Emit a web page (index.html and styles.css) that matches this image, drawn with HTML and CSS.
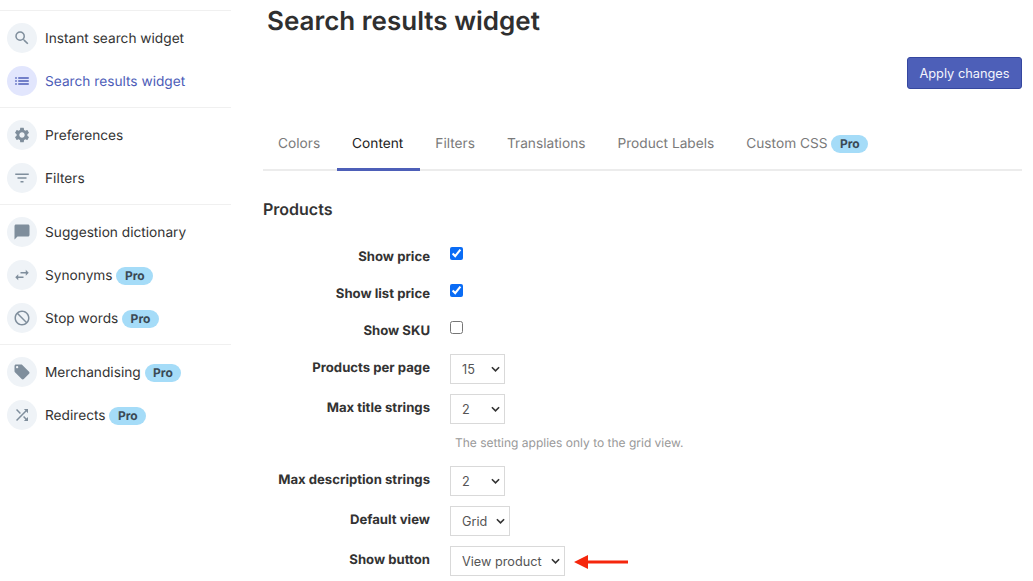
FILE: index.html
```html
<!DOCTYPE html>
<html lang="en">
<head>
  <meta charset="UTF-8">
  <meta name="viewport" content="width=device-width, initial-scale=1.0">
  <title>Search results widget</title>
  <link rel="stylesheet" href="styles.css">
</head>
<body>
  <aside class="sidebar">
    <ul class="nav-group">
      <li class="nav-item">
        <span class="nav-icon"><svg viewBox="0 0 24 24"><path d="M15.5 14h-.79l-.28-.27A6.471 6.471 0 0 0 16 9.5 6.5 6.5 0 1 0 9.5 16c1.61 0 3.09-.59 4.23-1.57l.27.28v.79l5 4.99L20.49 19l-4.99-5zm-6 0C7.01 14 5 11.99 5 9.5S7.01 5 9.5 5 14 7.01 14 9.5 11.99 14 9.5 14z"/></svg></span>
        <span class="nav-text">Instant search widget</span>
      </li>
      <li class="nav-item active">
        <span class="nav-icon"><svg viewBox="0 0 24 24"><path d="M3 13h2v-2H3v2zm0 4h2v-2H3v2zm0-8h2V7H3v2zm4 4h14v-2H7v2zm0 4h14v-2H7v2zM7 7v2h14V7H7z"/></svg></span>
        <span class="nav-text">Search results widget</span>
      </li>
    </ul>
    <ul class="nav-group">
      <li class="nav-item">
        <span class="nav-icon"><svg viewBox="0 0 24 24"><path d="M19.14 12.94c.04-.3.06-.61.06-.94 0-.32-.02-.64-.07-.94l2.03-1.58a.49.49 0 0 0 .12-.61l-1.92-3.32a.488.488 0 0 0-.59-.22l-2.39.96c-.5-.38-1.03-.7-1.62-.94l-.36-2.54a.484.484 0 0 0-.48-.41h-3.84c-.24 0-.43.17-.47.41l-.36 2.54c-.59.24-1.13.57-1.62.94l-2.39-.96c-.22-.08-.47 0-.59.22L2.74 8.87c-.12.21-.08.47.12.61l2.03 1.58c-.05.3-.09.63-.09.94s.02.64.07.94l-2.03 1.58a.49.49 0 0 0-.12.61l1.92 3.32c.12.22.37.29.59.22l2.39-.96c.5.38 1.03.7 1.62.94l.36 2.54c.05.24.24.41.48.41h3.84c.24 0 .44-.17.47-.41l.36-2.54c.59-.24 1.13-.56 1.62-.94l2.39.96c.22.08.47 0 .59-.22l1.92-3.32c.12-.22.07-.47-.12-.61l-2.01-1.58zM12 15.6c-1.98 0-3.6-1.62-3.6-3.6s1.62-3.6 3.6-3.6 3.6 1.62 3.6 3.6-1.62 3.6-3.6 3.6z"/></svg></span>
        <span class="nav-text">Preferences</span>
      </li>
      <li class="nav-item">
        <span class="nav-icon"><svg viewBox="0 0 24 24"><path d="M10 18h4v-2h-4v2zM3 6v2h18V6H3zm3 7h12v-2H6v2z"/></svg></span>
        <span class="nav-text">Filters</span>
      </li>
    </ul>
    <ul class="nav-group">
      <li class="nav-item">
        <span class="nav-icon"><svg viewBox="0 0 24 24"><path d="M20 2H4c-1.1 0-1.99.9-1.99 2L2 22l4-4h14c1.1 0 2-.9 2-2V4c0-1.1-.9-2-2-2z"/></svg></span>
        <span class="nav-text">Suggestion dictionary</span>
      </li>
      <li class="nav-item">
        <span class="nav-icon"><svg viewBox="0 0 24 24"><path d="M6.99 11L3 15l3.99 4v-3H14v-2H6.99v-3zM21 9l-3.99-4v3H10v2h7.01v3L21 9z"/></svg></span>
        <span class="nav-text">Synonyms <span class="pro">Pro</span></span>
      </li>
      <li class="nav-item">
        <span class="nav-icon"><svg viewBox="0 0 24 24"><path d="M12 2C6.48 2 2 6.48 2 12s4.48 10 10 10 10-4.48 10-10S17.52 2 12 2zm0 18c-4.42 0-8-3.58-8-8 0-1.85.63-3.55 1.69-4.9L16.9 18.31A7.902 7.902 0 0 1 12 20zm6.31-3.1L7.1 5.69A7.902 7.902 0 0 1 12 4c4.42 0 8 3.58 8 8 0 1.85-.63 3.55-1.69 4.9z"/></svg></span>
        <span class="nav-text">Stop words <span class="pro">Pro</span></span>
      </li>
    </ul>
    <ul class="nav-group">
      <li class="nav-item">
        <span class="nav-icon"><svg viewBox="0 0 24 24"><path d="M21.41 11.58l-9-9C12.05 2.22 11.55 2 11 2H4c-1.1 0-2 .9-2 2v7c0 .55.22 1.05.59 1.42l9 9c.36.36.86.58 1.41.58.55 0 1.05-.22 1.41-.59l7-7c.37-.36.59-.86.59-1.41 0-.55-.23-1.06-.59-1.42zM5.5 7C4.67 7 4 6.33 4 5.5S4.67 4 5.5 4 7 4.67 7 5.5 6.33 7 5.5 7z"/></svg></span>
        <span class="nav-text">Merchandising <span class="pro">Pro</span></span>
      </li>
      <li class="nav-item">
        <span class="nav-icon"><svg viewBox="0 0 24 24"><path d="M10.59 9.17L5.41 4 4 5.41l5.17 5.17 1.42-1.41zM14.5 4l2.04 2.04L4 18.59 5.41 20 17.96 7.46 20 9.5V4h-5.5zm.33 9.41l-1.41 1.41 3.13 3.13L14.5 20H20v-5.5l-2.04 2.04-3.13-3.13z"/></svg></span>
        <span class="nav-text">Redirects <span class="pro">Pro</span></span>
      </li>
    </ul>
  </aside>

  <main class="content">
    <h1>Search results widget</h1>

    <div class="actions">
      <button class="apply-btn" type="button">Apply changes</button>
    </div>

    <nav class="tabs">
      <a class="tab">Colors</a>
      <a class="tab current">Content</a>
      <a class="tab">Filters</a>
      <a class="tab">Translations</a>
      <a class="tab">Product Labels</a>
      <a class="tab">Custom CSS <span class="pro">Pro</span></a>
    </nav>

    <h2>Products</h2>

    <form class="settings">
      <div class="field check-field">
        <label>Show price</label>
        <input type="checkbox" checked>
      </div>
      <div class="field check-field">
        <label>Show list price</label>
        <input type="checkbox" checked>
      </div>
      <div class="field check-field">
        <label>Show SKU</label>
        <input type="checkbox">
      </div>
      <div class="field">
        <label>Products per page</label>
        <select class="select-num"><option>15</option></select>
      </div>
      <div class="field">
        <label>Max title strings</label>
        <select class="select-num"><option>2</option></select>
      </div>
      <p class="help">The setting applies only to the grid view.</p>
      <div class="field">
        <label>Max description strings</label>
        <select class="select-num"><option>2</option></select>
      </div>
      <div class="field">
        <label>Default view</label>
        <select class="select-view"><option>Grid</option></select>
      </div>
      <div class="field">
        <label>Show button</label>
        <select class="select-button"><option>View product</option></select>
        <svg class="arrow" viewBox="0 0 54 14"><path d="M0 7L14 0v5.5h40v3H14V14z"/></svg>
      </div>
    </form>
  </main>
</body>
</html>
```

FILE: styles.css
```css
* {
  margin: 0;
  padding: 0;
  box-sizing: border-box;
}

body {
  font-family: Inter, "Liberation Sans", sans-serif;
  font-size: 13.7px;
  text-rendering: geometricPrecision;
  color: #333;
  background-color: white;
  display: flex;
  height: 581px;
  overflow: hidden;
}

/* sidebar */
.sidebar {
  width: 231px;
  flex-shrink: 0;
  padding-top: 10px;
}

.nav-group {
  list-style: none;
  display: flex;
  flex-direction: column;
  gap: 13px;
  border-top: 1px solid #f0f0f0;
  padding: 12px 0 11px 7px;
}

.nav-item {
  display: flex;
  align-items: center;
  gap: 8px;
  height: 30px;
}

.nav-item.active {
  color: #4d5db8;
}

.nav-icon {
  width: 30px;
  height: 30px;
  border-radius: 50%;
  background-color: #eff3f7;
  display: flex;
  align-items: center;
  justify-content: center;
}

.nav-icon svg {
  width: 18px;
  height: 18px;
  fill: #7f8e9c;
}

.active .nav-icon {
  background-color: #e2e6fd;
}

.active .nav-icon svg {
  fill: #4d5db8;
}

.nav-text {
  margin-top: 2px;
}

.pro {
  display: inline-block;
  background-color: #a5dcf8;
  color: #3b4a55;
  font-size: 12px;
  font-weight: 700;
  line-height: 18px;
  padding: 0 8.5px;
  border-radius: 9px;
}

/* main column */
.content {
  width: 759px;
  margin-left: 32px;
}

h1 {
  font-size: 26px;
  font-weight: 600;
  line-height: 34px;
  margin-top: 5px;
  margin-left: 4px;
  color: #2f2f2f;
}

.actions {
  display: flex;
  justify-content: flex-end;
  margin-top: 18px;
}

.apply-btn {
  font-family: inherit;
  font-size: 12.8px;
  width: 115px;
  height: 32px;
  color: #f4f5fc;
  background-color: #4d5fb8;
  border: 1px solid #35479f;
  border-radius: 3px;
}

.tabs {
  display: flex;
  margin-top: 28px;
  height: 54px;
  border-bottom: 2px solid #ececec;
}

.tab {
  padding: 17px 17px 0 15px;
  height: 54px;
  line-height: 20px;
  color: #7a7a7a;
  white-space: nowrap;
}

.tab.current {
  color: #222;
  border-bottom: 3px solid #4d5fb8;
}

h2 {
  font-size: 16px;
  font-weight: 600;
  line-height: 20px;
  margin-top: 28px;
  margin-bottom: 24px;
}

.field {
  display: flex;
  align-items: flex-start;
  gap: 20px;
  height: 30px;
  margin-bottom: 10px;
}

.check-field {
  height: 27px;
}

.field label {
  width: 167px;
  flex-shrink: 0;
  text-align: right;
  font-size: 13.15px;
  font-weight: 700;
  line-height: 28px;
  white-space: nowrap;
}

.check-field input {
  width: 13px;
  height: 13px;
  margin-top: 4px;
  accent-color: #0a6cf5;
}

select {
  appearance: none;
  font-family: inherit;
  font-size: 12.7px;
  color: #555;
  height: 30px;
  padding-left: 11px;
  background-color: white;
  border: 1px solid #d9d9d9;
  border-radius: 0;
  background-image: url("data:image/svg+xml,%3Csvg xmlns='http://www.w3.org/2000/svg' viewBox='0 0 10 6'%3E%3Cpath d='M1 1l4 4 4-4' fill='none' stroke='%23333' stroke-width='1.8'/%3E%3C/svg%3E");
  background-repeat: no-repeat;
  background-size: 9px 6px;
  background-position: right 4px center;
}

.select-num {
  width: 55px;
}

.select-view {
  width: 60px;
}

.select-button {
  width: 115px;
}

.arrow {
  width: 54px;
  height: 14px;
  margin: 9px 0 0 -11px;
  fill: #f5260c;
}

.help {
  font-size: 12px;
  line-height: 17px;
  color: #999;
  margin: 0 0 15px 192px;
}
```
